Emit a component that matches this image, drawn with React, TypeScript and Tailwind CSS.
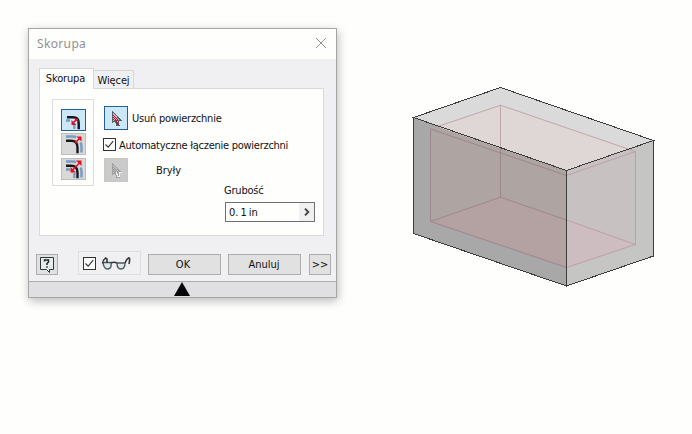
import type { ReactNode } from "react";

function Cursor({ disabled = false }: { disabled?: boolean }) {
  return (
    <svg width="22" height="22" viewBox="0 0 22 22" shapeRendering="crispEdges">
      <path d="M7.5 4.5v11l2.5-2 2 5h2l-1-5h3z" fill={disabled ? "#c2c2c2" : "#e3a9b0"} stroke={disabled ? "#a0a0a0" : "#53606b"} strokeWidth="1" />
      {[6, 7, 8, 9, 10, 11, 12].map((y) => (
        <path key={y} d={`M${8 + (y % 2)} ${y}.5H${y + 2}`} stroke={disabled ? "#929292" : "#b51a2c"} strokeDasharray="1 1" />
      ))}
      <path d="M11.5 13v2h1v2h1" fill="none" stroke={disabled ? "#eee" : "#b51a2c"} strokeWidth="1" />
      {disabled && <path d="M14 13.5h3M14.5 14v4" stroke="#eee" strokeWidth="1" />}
    </svg>
  );
}

function ShellIcon({ kind }: { kind: "inside" | "outside" | "both" }) {
  return (
    <svg className="shrink-0" width="23" height="20" viewBox="0 0 23 20">
      {kind !== "outside" && <path d="M4 10.5h4M12.3 14v5" fill="none" stroke="#789cc2" strokeWidth="2.3" />}
      {kind === "inside" && <path d="M5 7.2h6q5.7 0 5.7 6v6" fill="none" stroke="#15181c" strokeWidth="2.5" />}
      {kind !== "inside" && (
        <>
          <path d="M4 2.5h7q2 0 3 1M18.5 8.5q1 2 1 4v6" fill="none" stroke="#789cc2" strokeWidth="2.5" />
          <path d="M4 6.7h5q6.5 0 6.5 7v5.5" fill="none" stroke="#15181c" strokeWidth="2.4" />
        </>
      )}
      <g fill="#dd1020" stroke="#dd1020" strokeWidth="1.6">
        {kind === "inside" && <><path d="M11.5 12.5l3-3" /><path d="M9.5 10v5h5zM12 8.5h4v4z" stroke="none" /></>}
        {kind === "outside" && <><path d="M14 8l4-4" /><path d="M14.5 2.5h5v5zM12.8 5.8v3.4h3.4z" stroke="none" /></>}
        {kind === "both" && <><path d="M10 11.5l8-8" /><path d="M14 1.5h5.5v5.5zM8.5 8v5.5h5.5z" stroke="none" /></>}
      </g>
    </svg>
  );
}

function Check() {
  return (
    <span className="flex size-[13px] shrink-0 items-center justify-center border border-[#333] bg-[#fdfdfb]">
      <svg width="11" height="11" viewBox="0 0 11 11"><path d="M1.5 5.5l2.7 2.7 5-6" fill="none" stroke="#333" strokeWidth="1.1" /></svg>
    </span>
  );
}

function Button({ children, width }: { children: ReactNode; width: string }) {
  return <button className={`flex h-[21px] shrink-0 items-center justify-center border border-[#adadad] bg-[#e1e1e2] ${width}`}>{children}</button>;
}

function Box() {
  return (
    <svg className="mt-[80px] ml-[70px] shrink-0" width="250" height="215" viewBox="407 80 250 215">
      <path d="M413.5 117.5L500.5 87.5 653.5 140.5 566.5 170.5z" fill="#dadadb" />
      <path d="M413.5 117.5L566.5 170.5V286L413.5 233.5z" fill="#a8a8a9" />
      <path d="M566.5 170.5L653.5 140.5V256L566.5 286z" fill="#c5c5c4" />
      <path d="M436.4 126.5L500.5 105.2 630.5 148.5 566.5 170.5z" fill="#dfd7d6" />
      <path d="M430.5 129L436.4 126.5 566.5 170.5V267.5L430.5 221.5z" fill="#aea5a3" />
      <path d="M566.5 170.5L630.5 148.5 636 151.5V244.5L566.5 267.5z" fill="#c7c1c2" />
      <path d="M430.5 221.5L500.5 197.2 566.5 220V267.5z" fill="#b4a1a2" />
      <path d="M566.5 220L635.5 244.5 566.5 267.5z" fill="#cdbdc0" />
      <g fill="none" stroke="#987f83" strokeWidth=".8">
        <path d="M430.5 129V221.5L500.5 197.2 566.5 220" />
        <path d="M500.5 148V197.2M430.5 129L566.5 175.5M430.5 221.5L566.5 267.5" />
      </g>
      <g fill="none" stroke="#b9999f" strokeWidth=".8">
        <path d="M430.5 129L500.5 105.2 635.5 151.5V244.5L566.5 220" />
        <path d="M500.5 105.2V148M566.5 267.5L635.5 244.5M566.5 175.5L635.5 151.5" />
      </g>
      <path d="M413.5 117.5L500.5 87.5 653.5 140.5 566.5 170.5zM413.5 117.5V233.5L566.5 286 653.5 256V140.5M566.5 170.5V286" fill="none" stroke="#3c3c3c" shapeRendering="crispEdges" />
    </svg>
  );
}

export default function App() {
  return (
    <main className="flex h-[434px] w-[692px] items-start overflow-hidden bg-[#fefefd] pt-[28px] pl-[28px] font-['DejaVu_Sans_Condensed','DejaVu_Sans',sans-serif] text-[11px] leading-[16px] text-[#111] [font-stretch:condensed]">
      <section className="flex h-[270px] w-[309px] shrink-0 flex-col border border-[#a6a6a9] bg-[#f0f0f3] shadow-[1px_3px_9px_#bbb]">
        <header className="flex h-[30px] shrink-0 items-center justify-between bg-[#fefefd] pr-[9px] pl-[8px]">
          <span className="font-['Noto_Sans',sans-serif] text-[12px] tracking-[0.35px] text-[#929292] [font-stretch:normal]">Skorupa</span>
          <svg className="mb-[2px]" width="12" height="12" viewBox="0 0 12 12"><path d="M1 1l10 10M11 1L1 11" stroke="#85858a" strokeWidth=".9" /></svg>
        </header>
        <nav className="mt-[9px] ml-[10px] flex h-[20px] shrink-0 items-end">
          <div className="z-10 -mb-px flex h-[21px] w-[55px] justify-center border border-b-0 border-[#d7d7da] bg-[#fefefd] pt-[2px] pr-[2px] tracking-[-0.15px]">Skorupa</div>
          <div className="flex h-[18px] w-[40px] justify-center border border-l-0 border-b-0 border-[#d7d7da] pt-[2px] tracking-[-0.1px]">Więcej</div>
        </nav>
        <div className="ml-[10px] flex h-[148px] w-[285px] shrink-0 border border-[#d9d9dc] bg-[#fefefd] pt-[10px] pl-[12px]">
          <div className="flex h-[87px] w-[42px] shrink-0 flex-col items-center border border-[#dcdce0] pt-[9px]">
            <div className="flex h-[22px] w-[25px] shrink-0 border border-[#236099] bg-[#cce7f8]"><ShellIcon kind="inside" /></div>
            <div className="mt-[2px] flex h-[22px] w-[25px] shrink-0 border border-[#bdbdbd] bg-[#d9d9da]"><ShellIcon kind="outside" /></div>
            <div className="mt-[3px] flex h-[22px] w-[25px] shrink-0 border border-[#bdbdbd] bg-[#d9d9da]"><ShellIcon kind="both" /></div>
          </div>
          <div className="flex flex-1 flex-col pt-[7px] pl-[9px]">
            <div className="flex h-[24px] items-center gap-[4px] pl-px">
              <div className="size-[24px] border border-[#236099] bg-[#cce7f8]"><Cursor /></div>
              <span className="pt-[2px] tracking-[-0.23px]">Usuń powierzchnie</span>
            </div>
            <div className="mt-[7px] flex h-[15px] items-center gap-[3px]">
              <Check /><span className="whitespace-nowrap pt-[2px] tracking-[-0.26px]">Automatyczne łączenie powierzchni</span>
            </div>
            <div className="mt-[6px] flex h-[24px] items-center gap-[28px] pl-px">
              <div className="size-[24px] border border-[#c7c7c7] bg-[#cacaca]"><Cursor disabled /></div>
              <span className="pt-[2px] tracking-[-0.05px]">Bryły</span>
            </div>
            <div className="ml-[121px] pt-px tracking-[-0.2px]">Grubość</div>
            <div className="mt-[3px] ml-[122px] flex h-[20px] w-[90px] border border-[#707072] pl-[3px]">
              <span className="flex-1 pt-px leading-[18px]">0.<span className="ml-[2px]">1</span><span className="ml-[2px]">in</span></span>
              <span className="flex w-[15px] items-center justify-center bg-[#f0f0f3]"><svg width="6" height="8" viewBox="0 0 6 8"><path d="M1 .7L4.3 4 1 7.3" fill="none" stroke="#444" strokeWidth="1.9" /></svg></span>
            </div>
          </div>
        </div>
        <div className="mt-[15px] ml-[7px] flex h-[24px] shrink-0 items-end">
          <Button width="w-[22px]">
            <svg width="18" height="19" viewBox="0 0 18 19"><path d="M2.5 2.5h13v12h-4v3l-3-3h-6z" fill="#e5edf0" stroke="#343434" /><path d="M6.5 6.5V5h4v2L9 8.5V10M9 11.3v1.4" fill="none" stroke="#222" strokeWidth="1.5" /></svg>
          </Button>
          <div className="ml-[20px] flex h-[24px] w-[63px] items-center gap-[5px] border border-[#dedee1] pl-[4px]">
            <Check />
            <svg width="30" height="15" viewBox="0 0 30 15"><path d="M2 6.5h8q1 6-3 6.5T2 6.5zM16 7h8q0 6-4 6T16 7z" fill="#dce7e9" stroke="#4c5b62" strokeWidth="1.4" /><path d="M1.5 7.5q0-3 3-5.5L6 3v4M10 7q3-1.500 6 0M24 7q1.500-4 3.500-5T28 8" fill="none" stroke="#34383a" strokeWidth="1.6" /></svg>
          </div>
          <div className="ml-[7px]"><Button width="w-[73px]"><span className="pt-px pr-[3px]">OK</span></Button></div>
          <div className="ml-[7px]"><Button width="w-[73px]"><span className="pt-px pr-px">Anuluj</span></Button></div>
          <div className="ml-[8px]"><Button width="w-[22px]"><span className="pt-px">&gt;&gt;</span></Button></div>
        </div>
        <footer className="mt-auto flex h-[16px] shrink-0 border-t border-[#adadaf] bg-[#e0e0e2]">
          <svg className="ml-[145px]" width="16" height="15" viewBox="0 0 16 15"><path d="M8 0l8 14H0z" fill="#050508" /></svg>
        </footer>
      </section>
      <div className="-mt-[28px] flex shrink-0"><Box /></div>
    </main>
  );
}
